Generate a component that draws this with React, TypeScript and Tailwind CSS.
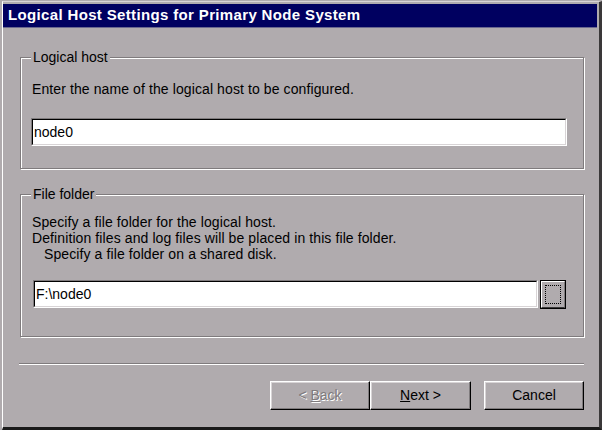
const face = "bg-[#b0abae]";

function Group({ label, children, className }: { label: string; children: React.ReactNode; className?: string }) {
  return (
    <fieldset
      className={`border border-[#7f7b7d] shadow-[inset_1px_1px_0_#fff,1px_1px_0_#fff] ${className ?? ""}`}
    >
      <legend className={`-ml-[1px] px-[2px] ${face} leading-[16px]`}>{label}</legend>
      {children}
    </fieldset>
  );
}

function TextBox({ value, className }: { value: string; className?: string }) {
  return (
    <div
      className={`h-[28px] border border-t-[#7f7b7d] border-l-[#7f7b7d] border-r-white border-b-white ${className ?? ""}`}
    >
      <div className="h-full border border-t-black border-l-black border-r-[#d8d4d6] border-b-[#d8d4d6] bg-white px-[1px] leading-[24px]">
        {value}
      </div>
    </div>
  );
}

function Button({ children, disabled, className }: { children: React.ReactNode; disabled?: boolean; className?: string }) {
  return (
    <button
      disabled={disabled}
      className={`h-[29px] border border-t-white border-l-white border-r-black border-b-black shadow-[inset_-1px_-1px_0_#7f7b7d,inset_1px_1px_0_#d8d4d6] ${face} ${
        disabled ? "text-[#7f7b7d] [text-shadow:1px_1px_0_#fff]" : "text-black"
      } ${className ?? "w-[100px]"}`}
    >
      {children}
    </button>
  );
}

export default function App() {
  return (
    <div
      className={`w-[602px] h-[430px] ${face} pl-[2px] pt-[1px] text-[14px] text-black`}
      style={{ fontFamily: '"Liberation Sans", Arial, sans-serif' }}
    >
      <div className="flex h-full flex-col border-l border-t border-l-white border-t-[#d8d4d6] border-r-[3px] border-b-[3px] border-r-[#3a3839] border-b-[#1a1a1a]">
        <div className="mr-[2px] mt-[2px] flex h-[24px] items-center border-b border-b-[#6a6890] bg-[#000060] pl-[5px] text-[15px] font-bold tracking-[0.35px] text-white">
          Logical Host Settings for Primary Node System
        </div>

        <div className="flex flex-col pl-[17px] pr-[15px]">
          <Group label="Logical host" className="mt-[21px] h-[120px] px-[11px]">
            <div className="mt-[16px] leading-[16px] tracking-[0.1px]">Enter the name of the logical host to be configured.</div>
            <TextBox value="node0" className="mt-[21px] -ml-[1px] mr-[5px]" />
          </Group>

          <Group label="File folder" className="mt-[17px] h-[151px] px-[11px]">
            <div className="mt-[12px] leading-[16px] tracking-[0.1px]">
              <div>Specify a file folder for the logical host.</div>
              <div>Definition files and log files will be placed in this file folder.</div>
              <div className="pl-[12px] leading-[17px]">Specify a file folder on a shared disk.</div>
            </div>
            <div className="mt-[17px] flex items-start gap-[2px] pl-[1px]">
              <TextBox value="F:\node0" className="w-[505px]" />
              <div className="h-[29px] w-[26px] border border-black bg-black">
                <div className={`h-full border border-t-white border-l-white border-r-[#7f7b7d] border-b-[#3a3839] ${face} p-[3px]`}>
                  <div className="h-full border border-dotted border-black" />
                </div>
              </div>
            </div>
          </Group>

          <div className="mt-[26px] -ml-[1px] h-[2px] border-t border-t-[#7f7b7d] border-b border-b-white" />

          <div className="mt-[16px] flex justify-end">
            <Button disabled>
              &lt; <span className="underline">B</span>ack
            </Button>
            <Button className="w-[101px]">
              <span className="underline">N</span>ext &gt;
            </Button>
            <Button className="ml-[13px] w-[100px]">Cancel</Button>
          </div>
        </div>
      </div>
    </div>
  );
}
